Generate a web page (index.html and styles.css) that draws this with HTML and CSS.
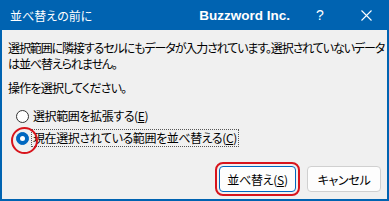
FILE: index.html
```html
<!DOCTYPE html>
<html lang="ja">
<head>
<meta charset="utf-8">
<title>並べ替えの前に</title>
<link rel="stylesheet" href="styles.css">
</head>
<body>
<div class="dialog">
  <div class="titlebar">
    <span class="title">並べ替えの前に</span>
    <span class="brand">Buzzword Inc.</span>
    <span class="tb-btn help">?</span>
    <span class="tb-btn close">
      <svg width="11" height="11" viewBox="0 0 11 11"><path d="M0.5 0.5 L10.5 10.5 M10.5 0.5 L0.5 10.5" stroke="#fff" stroke-width="1.1" fill="none"/></svg>
    </span>
  </div>
  <div class="content">
    <p class="msg"><span class="line">選択範囲に隣接するセルにもデータが入力されています。選択されていないデータ</span><span class="line">は並べ替えられません。</span></p>
    <p class="prompt">操作を選択してください。</p>
    <div class="options">
      <div class="option">
        <span class="radio"></span>
        <span class="label">選択範囲を拡張する(<u>E</u>)</span>
      </div>
      <div class="option">
        <span class="radio checked"></span>
        <span class="label focus">現在選択されている範囲を並べ替える(<u>C</u>)</span>
      </div>
    </div>
    <div class="buttons">
      <button class="btn default">並べ替え(<u>S</u>)</button>
      <button class="btn cancel">キャンセル</button>
    </div>
  </div>
</div>
</body>
</html>
```
FILE: styles.css
```css
* { box-sizing: border-box; }
html, body { margin: 0; padding: 0; }
body {
  width: 389px;
  height: 201px;
  overflow: hidden;
  font-family: "Noto Sans CJK JP", "Noto Sans", sans-serif;
  font-feature-settings: "palt";
  font-size: 12px;
  color: #000;
}
.dialog {
  width: 389px;
  height: 201px;
  background: #f0f0f0;
  border: 2px solid #0063b1;
  border-top: 0;
  display: flex;
  flex-direction: column;
}
.titlebar {
  height: 30px;
  margin: 0 -2px;
  background: #0063b1;
  color: #fff;
  display: flex;
  align-items: center;
  flex: none;
}
.title {
  flex: 1;
  padding-left: 10px;
  font-size: 12px;
  white-space: nowrap;
}
.brand {
  font-family: "Liberation Sans", Arial, sans-serif;
  font-weight: bold;
  font-size: 13.5px;
  margin-right: 7px;
  white-space: nowrap;
}
.tb-btn {
  width: 46px;
  height: 30px;
  display: flex;
  align-items: center;
  justify-content: center;
}
.help {
  font-family: "Liberation Sans", Arial, sans-serif;
  font-size: 14px;
}
.content {
  flex: 1;
  display: flex;
  flex-direction: column;
  padding: 10px 6px 7px 6px;
}
.msg {
  margin: 0;
  display: flex;
  flex-direction: column;
  white-space: nowrap;
  letter-spacing: -1.1px;
}
.msg .line {
  display: block;
  height: 16px;
  line-height: 16px;
}
.prompt {
  margin: 8px 0 0 0;
  line-height: 15px;
  letter-spacing: -0.8px;
}
.options {
  margin-top: 10px;
  padding-left: 8px;
  display: flex;
  flex-direction: column;
}
.option {
  height: 22px;
  display: flex;
  align-items: center;
}
.radio {
  position: relative;
  width: 13px;
  height: 13px;
  border-radius: 50%;
  border: 1px solid #333;
  background: #fff;
  flex: none;
}
.radio.checked {
  border-color: #0067c0;
  background: #0067c0;
}
.radio.checked::before {
  content: "";
  position: absolute;
  left: 3px;
  top: 3px;
  width: 5px;
  height: 5px;
  border-radius: 50%;
  background: #fff;
}
.radio.checked::after {
  content: "";
  position: absolute;
  left: -6px;
  top: -6px;
  width: 23px;
  height: 23px;
  border-radius: 50%;
  border: 2px solid #d8141c;
}
.label {
  margin-left: 2px;
  padding: 0 1px;
  border: 1px dotted transparent;
  line-height: 16px;
  white-space: nowrap;
  letter-spacing: -0.4px;
}
.label.focus {
  border-color: #555;
}
.buttons {
  margin-top: auto;
  display: flex;
  justify-content: flex-end;
  gap: 11px;
}
.btn {
  font-family: inherit;
  font-feature-settings: "palt";
  font-size: 12px;
  letter-spacing: -0.3px;
  height: 26px;
  background: #fdfdfd;
  border: 1px solid #d0d0d0;
  border-radius: 4px;
  color: #000;
  padding: 0;
}
.btn.default {
  width: 77px;
  border-color: #0067c0;
  outline: 2px solid #d8141c;
  outline-offset: 2px;
}
.btn.cancel {
  width: 74px;
}
```
